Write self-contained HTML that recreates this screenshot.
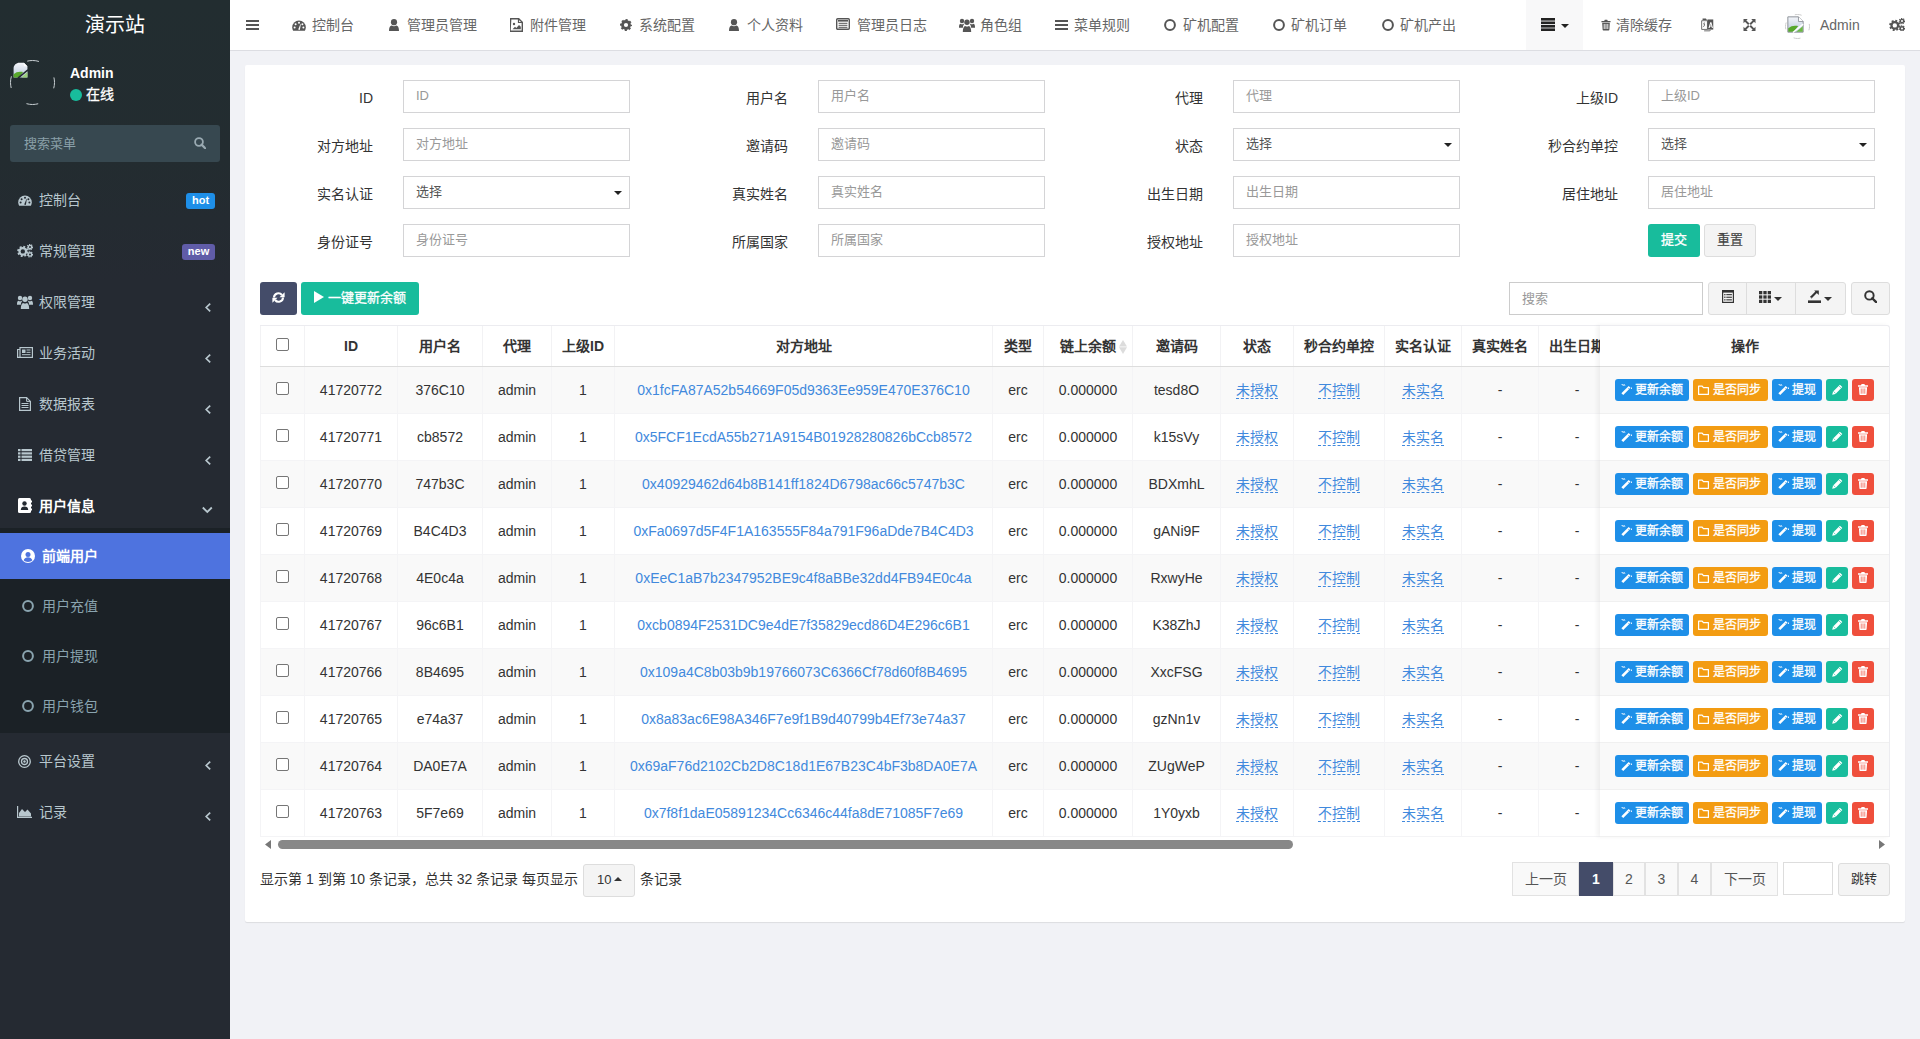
<!DOCTYPE html><html lang="zh-CN"><head><meta charset="utf-8"><title>前端用户</title><style>
*{box-sizing:border-box}
html,body{margin:0;padding:0;width:1920px;height:1039px;overflow:hidden;background:#f1f2f6;font-family:"Liberation Sans",sans-serif;font-size:14px;color:#333}
.ab{position:absolute}
.ab svg{display:block}
.t{position:absolute;white-space:nowrap;line-height:1}
#sb{position:absolute;left:0;top:0;width:230px;height:1039px;background:linear-gradient(#222d30 0,#232c30 160px,#252a32 280px,#252a32 100%)}
#hd{position:absolute;left:230px;top:0;width:1690px;height:51px;background:#fff;border-bottom:1px solid #dcdde2}
.nv{color:#666;font-size:14px}
.nvi{color:#555}
#pn{position:absolute;left:245px;top:65px;width:1660px;height:857px;background:#fff;border-radius:2px;box-shadow:0 1px 1px rgba(0,0,0,.09)}
.lbl{position:absolute;font-size:14px;color:#333;text-align:right;width:120px;line-height:20px}
.inp{position:absolute;height:33px;width:227px;border:1px solid #d4d4d6;background:#fff;font-size:13px;color:#999;line-height:29px;padding-left:12px}
.sel{color:#555}
.btn{position:absolute;border-radius:3px;color:#fff;text-align:center}
table.dt{border-collapse:collapse;table-layout:fixed;position:absolute;left:0;top:0}
table.dt th{height:40px;line-height:20px;font-weight:bold;border-left:1px solid #f2f2f4;border-bottom:1px solid #ddd;text-align:center;font-size:14px;color:#333;padding:0;white-space:nowrap;overflow:hidden}
table.dt td{height:47px;line-height:20px;border-left:1px solid #f4f4f6;border-bottom:1px solid #f4f4f6;padding-bottom:2px;text-align:center;font-size:14px;color:#333;padding:0;white-space:nowrap;overflow:hidden}
table.dt tr.s td{background:#f9f9f9}
table.dt td .cb{top:-2px}
.cb{display:inline-block;width:13px;height:13px;border:1px solid #767676;border-radius:2px;background:#fff;vertical-align:middle;position:relative;top:-3px;left:0}
.lk{color:#4189dd}
.dl{color:#4189dd;border-bottom:1px dashed #4189dd}
.rbt{position:absolute;top:0;line-height:22px;-webkit-text-stroke:0.3px #fff}
.rb{position:absolute;height:22px;top:12px;color:#fff;border-radius:3px;color:#fff;font-size:12px;line-height:22px}
.pg{position:absolute;top:862px;height:34px;border:1px solid #e2e2e2;background:#f9f9f9;color:#555;text-align:center;line-height:32px;font-size:14px}
</style></head><body>
<div id="sb">
<div class="t" style="left:0;width:230px;top:14px;text-align:center;color:#fff;font-size:20px;line-height:22px">演示站</div>
<div class="ab" style="left:10px;top:60px;width:45px;height:45px"><svg width="45" height="45" viewBox="0 0 45 45" style=""><circle cx="22.5" cy="22.5" r="22" fill="none" stroke="#c8cfd2" stroke-width="1" stroke-dasharray="12 22.55" stroke-dashoffset="40.6"/></svg></div>
<div class="ab" style="left:12px;top:62px;width:17px;height:17px"><svg width="17" height="17" viewBox="0 0 16 16" style=""><defs><linearGradient id="bgA" x1="0" y1="0" x2="0" y2="1"><stop offset="0" stop-color="#f4f6fa"/><stop offset="1" stop-color="#b9c8dc"/></linearGradient></defs><path d="M1.5 14.5V6C1.5 3 4 0.8 7 0.8h4.2l3.3 3.3v10.4z" fill="url(#bgA)"/><path d="M11.2 0.8v3.3h3.3" fill="#fff"/><path d="M1.5 14.5V11.5C4 9 7.5 8.6 10.5 9.5L6.5 14.5z" fill="#58a82c"/><path d="M8.8 14.5l5.7-5v5z" fill="#9bcf7a"/><path d="M5.6 15.2L15 7.4" stroke="#242a31" stroke-width="1.4"/></svg></div>
<div class="t" style="left:70px;top:66px;color:#fff;font-weight:bold;font-size:14px;line-height:14px">Admin</div>
<div class="ab" style="left:70px;top:89px;width:12px;height:12px;border-radius:50%;background:#18bc9c"></div>
<div class="t" style="left:86px;top:87px;color:#fff;font-size:14px;line-height:14px;-webkit-text-stroke:.3px #fff">在线</div>
<div class="ab" style="left:10px;top:125px;width:210px;height:37px;background:#374850;border-radius:3px"></div>
<div class="t" style="left:24px;top:137px;color:#8aa0a9;font-size:13px;line-height:14px">搜索菜单</div>
<div class="ab" style="left:194px;top:137px;width:12px;height:12px;color:#9aaab2"><svg width="12" height="12" viewBox="0 0 12 12" style=""><circle cx="5" cy="5" r="3.9" fill="none" stroke="currentColor" stroke-width="1.8"/><path d="M7.6 7.6l3.8 3.8" stroke="currentColor" stroke-width="2.2" stroke-linecap="round"/></svg></div>
<div class="t" style="left:39px;top:192px;color:#b8c7ce;font-size:14px;line-height:16px;font-weight:normal">控制台</div>
<div class="ab" style="left:18px;top:195px;width:14px;height:11px;color:#b8c7ce"><svg width="14" height="11" viewBox="0 0 14 11" style=""><path d="M7 0.5A6.8 6.8 0 0 0 0.2 7.3c0 1.3 .3 2.5 .9 3.5h11.8c.6-1 .9-2.2 .9-3.5A6.8 6.8 0 0 0 7 0.5z" fill="currentColor"/><g fill="#242a31"><circle cx="2.6" cy="7.4" r="1"/><circle cx="3.6" cy="4.2" r="1"/><circle cx="7" cy="2.8" r="1"/><circle cx="11.4" cy="7.4" r="1"/><circle cx="10.4" cy="4.2" r="1"/><path d="M6.2 9.6 L8.6 3.8 L8.9 3.9 L7.8 10 Z"/></g></svg></div>
<div class="t" style="left:39px;top:243px;color:#b8c7ce;font-size:14px;line-height:16px;font-weight:normal">常规管理</div>
<div class="ab" style="left:17px;top:244px;width:16px;height:14px;color:#b8c7ce"><svg width="16" height="14" viewBox="0 0 16 14" style=""><circle cx="5.8" cy="7.4" r="3.3" fill="none" stroke="currentColor" stroke-width="2.2"/><circle cx="5.8" cy="7.4" r="4.6" fill="none" stroke="currentColor" stroke-width="2" stroke-dasharray="1.9 1.7"/><circle cx="13" cy="3.1" r="1.7" fill="none" stroke="currentColor" stroke-width="1.4"/><circle cx="13" cy="3.1" r="2.6" fill="none" stroke="currentColor" stroke-width="1.2" stroke-dasharray="1.2 1"/><circle cx="13" cy="10.4" r="1.7" fill="none" stroke="currentColor" stroke-width="1.4"/><circle cx="13" cy="10.4" r="2.6" fill="none" stroke="currentColor" stroke-width="1.2" stroke-dasharray="1.2 1"/></svg></div>
<div class="t" style="left:39px;top:294px;color:#b8c7ce;font-size:14px;line-height:16px;font-weight:normal">权限管理</div>
<div class="ab" style="left:17px;top:295px;width:16px;height:14px;color:#b8c7ce"><svg width="16" height="14" viewBox="0 0 16 14" style=""><circle cx="3" cy="3" r="2.2" fill="currentColor"/><circle cx="13" cy="3" r="2.2" fill="currentColor"/><circle cx="8" cy="4.2" r="2.7" fill="currentColor"/><path d="M0 9c0-2 .6-3 1.5-3.3.5 .4 1 .6 1.5 .6s1.2-.2 1.6-.6l.6 .2c-.8 .9-1.3 2.2-1.3 3.8H0z" fill="currentColor"/><path d="M16 9c0-2-.6-3-1.5-3.3-.5 .4-1 .6-1.5 .6s-1.2-.2-1.6-.6l-.6 .2c.8 .9 1.3 2.2 1.3 3.8H16z" fill="currentColor"/><path d="M3.8 14c0-3.7 1-5.6 2.4-6 .5 .4 1.1 .6 1.8 .6s1.3-.2 1.8-.6c1.4 .4 2.4 2.3 2.4 6z" fill="currentColor"/></svg></div>
<div class="ab" style="left:205px;top:303px;width:7px;height:9px;color:#b8c7ce"><svg width="7" height="9" viewBox="0 0 7 9" style=""><path d="M5.2 0.6 L1.2 4.5 L5.2 8.4" fill="none" stroke="currentColor" stroke-width="1.7"/></svg></div>
<div class="t" style="left:39px;top:345px;color:#b8c7ce;font-size:14px;line-height:16px;font-weight:normal">业务活动</div>
<div class="ab" style="left:17px;top:347px;width:16px;height:11px;color:#b8c7ce"><svg width="16" height="11" viewBox="0 0 16 11" style=""><rect x="3" y="0.6" width="12.4" height="9.8" fill="none" stroke="currentColor" stroke-width="1.2"/><path d="M3 2.5H0.6v7.9h2.4" fill="none" stroke="currentColor" stroke-width="1.2"/><rect x="5" y="2.5" width="3.5" height="3.5" fill="currentColor"/><rect x="9.5" y="2.5" width="4" height="1" fill="currentColor"/><rect x="9.5" y="4.8" width="4" height="1" fill="currentColor"/><rect x="5" y="7.2" width="8.5" height="1" fill="currentColor"/></svg></div>
<div class="ab" style="left:205px;top:354px;width:7px;height:9px;color:#b8c7ce"><svg width="7" height="9" viewBox="0 0 7 9" style=""><path d="M5.2 0.6 L1.2 4.5 L5.2 8.4" fill="none" stroke="currentColor" stroke-width="1.7"/></svg></div>
<div class="t" style="left:39px;top:396px;color:#b8c7ce;font-size:14px;line-height:16px;font-weight:normal">数据报表</div>
<div class="ab" style="left:19px;top:397px;width:12px;height:14px;color:#b8c7ce"><svg width="12" height="14" viewBox="0 0 12 14" style=""><path d="M0.6 0.6h7l3.8 3.8v9h-10.8z" fill="none" stroke="currentColor" stroke-width="1.2"/><path d="M7.6 0.6v3.8h3.8" fill="none" stroke="currentColor" stroke-width="1"/><rect x="2.5" y="6" width="7" height="1" fill="currentColor"/><rect x="2.5" y="8" width="7" height="1" fill="currentColor"/><rect x="2.5" y="10" width="7" height="1" fill="currentColor"/></svg></div>
<div class="ab" style="left:205px;top:405px;width:7px;height:9px;color:#b8c7ce"><svg width="7" height="9" viewBox="0 0 7 9" style=""><path d="M5.2 0.6 L1.2 4.5 L5.2 8.4" fill="none" stroke="currentColor" stroke-width="1.7"/></svg></div>
<div class="t" style="left:39px;top:447px;color:#b8c7ce;font-size:14px;line-height:16px;font-weight:normal">借贷管理</div>
<div class="ab" style="left:18px;top:449px;width:14px;height:12px;color:#b8c7ce"><svg width="14" height="12" viewBox="0 0 14 12" style=""><g fill="currentColor"><rect x="0" y="0" width="2.5" height="2.2"/><rect x="3.5" y="0" width="10.5" height="2.2"/><rect x="0" y="3.3" width="2.5" height="2.2"/><rect x="3.5" y="3.3" width="10.5" height="2.2"/><rect x="0" y="6.6" width="2.5" height="2.2"/><rect x="3.5" y="6.6" width="10.5" height="2.2"/><rect x="0" y="9.8" width="2.5" height="2.2"/><rect x="3.5" y="9.8" width="10.5" height="2.2"/></g></svg></div>
<div class="ab" style="left:205px;top:456px;width:7px;height:9px;color:#b8c7ce"><svg width="7" height="9" viewBox="0 0 7 9" style=""><path d="M5.2 0.6 L1.2 4.5 L5.2 8.4" fill="none" stroke="currentColor" stroke-width="1.7"/></svg></div>
<div class="t" style="left:39px;top:498px;color:#fff;font-size:14px;line-height:16px;font-weight:bold">用户信息</div>
<div class="ab" style="left:18px;top:498px;width:14px;height:15px"><svg width="14" height="15" viewBox="0 0 14 15" style=""><rect x="0" y="0" width="13" height="15" rx="1.5" fill="#fff"/><circle cx="6.5" cy="5.5" r="2.2" fill="#242a31"/><path d="M2.8 12c0-2.5 1.5-3.6 3.7-3.6s3.7 1.1 3.7 3.6z" fill="#242a31"/><rect x="12.3" y="2.5" width="1.7" height="2" fill="#fff"/><rect x="12.3" y="6.5" width="1.7" height="2" fill="#fff"/><rect x="12.3" y="10.5" width="1.7" height="2" fill="#fff"/></svg></div>
<div class="ab" style="left:202px;top:506px;width:11px;height:8px;color:#b8c7ce"><svg width="11" height="8" viewBox="0 0 11 8" style=""><path d="M0.8 1.5 L5.3 6 L9.8 1.5" fill="none" stroke="currentColor" stroke-width="1.8"/></svg></div>
<div class="ab" style="left:186px;top:193px;width:29px;height:16px;border-radius:3px;background:#1e8fe8;color:#fff;font-size:11px;font-weight:bold;text-align:center;line-height:15px">hot</div>
<div class="ab" style="left:182px;top:244px;width:33px;height:16px;border-radius:3px;background:#605ca8;color:#fff;font-size:11px;font-weight:bold;text-align:center;line-height:15px">new</div>
<div class="ab" style="left:0;top:528px;width:230px;height:205px;background:#1b2126"></div>
<div class="ab" style="left:0;top:533px;width:230px;height:46px;background:#4e73df"></div>
<div class="ab" style="left:21px;top:549px;width:14px;height:14px"><svg width="14" height="14" viewBox="0 0 14 14" style=""><circle cx="7" cy="7" r="7" fill="#fff"/><circle cx="7" cy="5.4" r="2.5" fill="#4e73df"/><path d="M2.6 11.3c.8-2 2.4-3 4.4-3s3.6 1 4.4 3C10.3 12.4 8.8 13 7 13s-3.3-.6-4.4-1.7z" fill="#4e73df"/></svg></div>
<div class="t" style="left:42px;top:548px;color:#fff;font-size:14px;line-height:16px;font-weight:bold">前端用户</div>
<div class="ab" style="left:22px;top:600px;width:12px;height:12px;color:#8aa4af"><svg width="12" height="12" viewBox="0 0 12 12" style=""><circle cx="6" cy="6" r="4.9" fill="none" stroke="currentColor" stroke-width="2"/></svg></div>
<div class="t" style="left:42px;top:598px;color:#8aa4af;font-size:14px;line-height:16px">用户充值</div>
<div class="ab" style="left:22px;top:650px;width:12px;height:12px;color:#8aa4af"><svg width="12" height="12" viewBox="0 0 12 12" style=""><circle cx="6" cy="6" r="4.9" fill="none" stroke="currentColor" stroke-width="2"/></svg></div>
<div class="t" style="left:42px;top:648px;color:#8aa4af;font-size:14px;line-height:16px">用户提现</div>
<div class="ab" style="left:22px;top:700px;width:12px;height:12px;color:#8aa4af"><svg width="12" height="12" viewBox="0 0 12 12" style=""><circle cx="6" cy="6" r="4.9" fill="none" stroke="currentColor" stroke-width="2"/></svg></div>
<div class="t" style="left:42px;top:698px;color:#8aa4af;font-size:14px;line-height:16px">用户钱包</div>
<div class="ab" style="left:18px;top:755px;width:13px;height:13px;color:#b8c7ce"><svg width="13" height="13" viewBox="0 0 13 13" style=""><circle cx="6.5" cy="6.5" r="5.8" fill="none" stroke="currentColor" stroke-width="1.3"/><circle cx="6.5" cy="6.5" r="3" fill="none" stroke="currentColor" stroke-width="1.3"/><circle cx="6.5" cy="6.5" r="1.2" fill="currentColor"/></svg></div>
<div class="t" style="left:39px;top:753px;color:#b8c7ce;font-size:14px;line-height:16px">平台设置</div>
<div class="ab" style="left:205px;top:761px;width:7px;height:9px;color:#b8c7ce"><svg width="7" height="9" viewBox="0 0 7 9" style=""><path d="M5.2 0.6 L1.2 4.5 L5.2 8.4" fill="none" stroke="currentColor" stroke-width="1.7"/></svg></div>
<div class="ab" style="left:17px;top:806px;width:15px;height:12px;color:#b8c7ce"><svg width="15" height="12" viewBox="0 0 15 12" style=""><path d="M0.6 0v11.4H15" fill="none" stroke="currentColor" stroke-width="1.2"/><path d="M2 10.5V7l3-4 3 3 2.5-2.5 3.5 4v3z" fill="currentColor"/></svg></div>
<div class="t" style="left:39px;top:804px;color:#b8c7ce;font-size:14px;line-height:16px">记录</div>
<div class="ab" style="left:205px;top:812px;width:7px;height:9px;color:#b8c7ce"><svg width="7" height="9" viewBox="0 0 7 9" style=""><path d="M5.2 0.6 L1.2 4.5 L5.2 8.4" fill="none" stroke="currentColor" stroke-width="1.7"/></svg></div>
</div>
<div id="hd"></div>
<div class="ab" style="left:246px;top:20px;width:13px;height:10px;color:#555"><svg width="13" height="10" viewBox="0 0 13 10" style=""><rect x="0" y="0" width="13" height="2" fill="currentColor"/><rect x="0" y="4" width="13" height="2" fill="currentColor"/><rect x="0" y="8" width="13" height="2" fill="currentColor"/></svg></div>
<div class="ab" style="left:292px;top:20px;width:14px;height:11px;color:#555"><svg width="14" height="11" viewBox="0 0 14 11" style=""><path d="M7 0.5A6.8 6.8 0 0 0 0.2 7.3c0 1.3 .3 2.5 .9 3.5h11.8c.6-1 .9-2.2 .9-3.5A6.8 6.8 0 0 0 7 0.5z" fill="currentColor"/><g fill="#fff"><circle cx="2.6" cy="7.4" r="1"/><circle cx="3.6" cy="4.2" r="1"/><circle cx="7" cy="2.8" r="1"/><circle cx="11.4" cy="7.4" r="1"/><circle cx="10.4" cy="4.2" r="1"/><path d="M6.2 9.6 L8.6 3.8 L8.9 3.9 L7.8 10 Z"/></g></svg></div>
<div class="t nv" style="left:312px;top:17px;line-height:16px">控制台</div>
<div class="ab" style="left:389px;top:19px;width:10px;height:12px;color:#555"><svg width="10" height="12" viewBox="0 0 10 12" style=""><circle cx="5" cy="3.2" r="3.1" fill="currentColor"/><path d="M0 12c0-3.5 1-5.3 2.6-5.6 .7 .5 1.5 .8 2.4 .8s1.7-.3 2.4-.8C9 6.7 10 8.5 10 12z" fill="currentColor"/></svg></div>
<div class="t nv" style="left:407px;top:17px;line-height:16px">管理员管理</div>
<div class="ab" style="left:510px;top:18px;width:13px;height:14px;color:#555"><svg width="13" height="14" viewBox="0 0 13 14" style=""><path d="M0.7 0.7h8l3.6 3.6v9h-12.3z" fill="none" stroke="currentColor" stroke-width="1.4"/><path d="M8.5 0.7v3.8h3.8" fill="none" stroke="currentColor" stroke-width="1.2"/><circle cx="4" cy="6" r="1.2" fill="currentColor"/><path d="M2.5 11.3l2.5-2.6 1.3 1.3 2.7-3 1.8 1.8v2.5z" fill="currentColor"/></svg></div>
<div class="t nv" style="left:530px;top:17px;line-height:16px">附件管理</div>
<div class="ab" style="left:620px;top:19px;width:12px;height:12px;color:#555"><svg width="12" height="12" viewBox="0 0 12 12" style=""><circle cx="6" cy="6" r="3.5" fill="none" stroke="currentColor" stroke-width="2.8"/><circle cx="6" cy="6" r="5.1" fill="none" stroke="currentColor" stroke-width="1.8" stroke-dasharray="2.1 1.9" stroke-dashoffset="1.05"/></svg></div>
<div class="t nv" style="left:639px;top:17px;line-height:16px">系统配置</div>
<div class="ab" style="left:729px;top:19px;width:10px;height:12px;color:#555"><svg width="10" height="12" viewBox="0 0 10 12" style=""><circle cx="5" cy="3.2" r="3.1" fill="currentColor"/><path d="M0 12c0-3.5 1-5.3 2.6-5.6 .7 .5 1.5 .8 2.4 .8s1.7-.3 2.4-.8C9 6.7 10 8.5 10 12z" fill="currentColor"/></svg></div>
<div class="t nv" style="left:747px;top:17px;line-height:16px">个人资料</div>
<div class="ab" style="left:836px;top:18px;width:14px;height:12px;color:#555"><svg width="14" height="12" viewBox="0 0 14 12" style=""><rect x="0.7" y="0.7" width="12.6" height="10.6" rx="1" fill="none" stroke="currentColor" stroke-width="1.4"/><rect x="2" y="2" width="10" height="1.6" fill="currentColor"/><rect x="2.6" y="4.8" width="8.8" height="1" fill="currentColor"/><rect x="2.6" y="6.8" width="8.8" height="1" fill="currentColor"/><rect x="2.6" y="8.8" width="8.8" height="1" fill="currentColor"/></svg></div>
<div class="t nv" style="left:857px;top:17px;line-height:16px">管理员日志</div>
<div class="ab" style="left:959px;top:18px;width:16px;height:14px;color:#555"><svg width="16" height="14" viewBox="0 0 16 14" style=""><circle cx="3" cy="3" r="2.2" fill="currentColor"/><circle cx="13" cy="3" r="2.2" fill="currentColor"/><circle cx="8" cy="4.2" r="2.7" fill="currentColor"/><path d="M0 9c0-2 .6-3 1.5-3.3.5 .4 1 .6 1.5 .6s1.2-.2 1.6-.6l.6 .2c-.8 .9-1.3 2.2-1.3 3.8H0z" fill="currentColor"/><path d="M16 9c0-2-.6-3-1.5-3.3-.5 .4-1 .6-1.5 .6s-1.2-.2-1.6-.6l-.6 .2c.8 .9 1.3 2.2 1.3 3.8H16z" fill="currentColor"/><path d="M3.8 14c0-3.7 1-5.6 2.4-6 .5 .4 1.1 .6 1.8 .6s1.3-.2 1.8-.6c1.4 .4 2.4 2.3 2.4 6z" fill="currentColor"/></svg></div>
<div class="t nv" style="left:980px;top:17px;line-height:16px">角色组</div>
<div class="ab" style="left:1055px;top:20px;width:13px;height:10px;color:#555"><svg width="13" height="10" viewBox="0 0 13 10" style=""><rect x="0" y="0" width="13" height="2" fill="currentColor"/><rect x="0" y="4" width="13" height="2" fill="currentColor"/><rect x="0" y="8" width="13" height="2" fill="currentColor"/></svg></div>
<div class="t nv" style="left:1074px;top:17px;line-height:16px">菜单规则</div>
<div class="ab" style="left:1164px;top:19px;width:12px;height:12px;color:#555"><svg width="12" height="12" viewBox="0 0 12 12" style=""><circle cx="6" cy="6" r="4.9" fill="none" stroke="currentColor" stroke-width="2"/></svg></div>
<div class="t nv" style="left:1183px;top:17px;line-height:16px">矿机配置</div>
<div class="ab" style="left:1273px;top:19px;width:12px;height:12px;color:#555"><svg width="12" height="12" viewBox="0 0 12 12" style=""><circle cx="6" cy="6" r="4.9" fill="none" stroke="currentColor" stroke-width="2"/></svg></div>
<div class="t nv" style="left:1291px;top:17px;line-height:16px">矿机订单</div>
<div class="ab" style="left:1382px;top:19px;width:12px;height:12px;color:#555"><svg width="12" height="12" viewBox="0 0 12 12" style=""><circle cx="6" cy="6" r="4.9" fill="none" stroke="currentColor" stroke-width="2"/></svg></div>
<div class="t nv" style="left:1400px;top:17px;line-height:16px">矿机产出</div>
<div class="ab" style="left:1526px;top:0;width:57px;height:50px;background:#f8f8f9"></div>
<div class="ab" style="left:1541px;top:18px;width:14px;height:13px;color:#222"><svg width="14" height="13" viewBox="0 0 14 13" style=""><rect x="0" y="0" width="14" height="2.6" fill="currentColor"/><rect x="0" y="3.5" width="14" height="2.6" fill="currentColor"/><rect x="0" y="7" width="14" height="2.6" fill="currentColor"/><rect x="0" y="10.4" width="14" height="2.6" fill="currentColor"/></svg></div>
<div class="ab" style="left:1561px;top:24px;width:8px;height:4px;color:#222"><svg width="8" height="4" viewBox="0 0 8 4" style=""><path d="M0 0h8L4 4z" fill="currentColor"/></svg></div>
<div class="ab" style="left:1601px;top:19px;width:10px;height:12px;color:#555"><svg width="10" height="12" viewBox="0 0 11 12" style=""><path d="M3.5 1.5 L4.2 0.2 h2.6 L7.5 1.5 H10.5 v1.4 H0.5 V1.5z" fill="currentColor"/><path d="M1.3 3.5h8.4l-.5 7.6c0 .5-.4 .9-.9 .9H2.7c-.5 0-.9-.4-.9-.9z" fill="currentColor"/><g fill="#fff"><rect x="3" y="4.8" width="1" height="5.6"/><rect x="5" y="4.8" width="1" height="5.6"/><rect x="7" y="4.8" width="1" height="5.6"/></g></svg></div>
<div class="t nv" style="left:1616px;top:17px;line-height:16px">清除缓存</div>
<div class="ab" style="left:1701px;top:18px;width:13px;height:14px;color:#555"><svg width="13" height="14" viewBox="0 0 12.5 13.5" style=""><path d="M0.6 2.6h5.6v8.4H0.6z" fill="#fff" stroke="currentColor" stroke-width=".8"/><path d="M1.5 0.6h3.2l1 1.4H1.5z" fill="currentColor"/><path d="M2 5.2l1.8 1.4M3.2 4.2v3.6M1.8 8.6l1.6-1.2" stroke="currentColor" stroke-width=".6" fill="none"/><path d="M6.2 1.4h5.6v9.8H6.2z" fill="currentColor"/><path d="M7.2 9.6l1.7-5.6h1.1l1.5 5.6h-1l-.4-1.3H8.7l-.4 1.3zm1.8-2.2h1l-.5-1.8z" fill="#fff"/><path d="M3 12.4h5.5l.8-1" stroke="currentColor" stroke-width=".8" fill="none"/></svg></div>
<div class="ab" style="left:1743px;top:19px;width:13px;height:12px;color:#555"><svg width="13" height="12" viewBox="0 0 13 13" style=""><path d="M0 0h4.6L3.1 1.6 6.5 5 5 6.5 1.6 3.1 0 4.6zM13 0v4.6l-1.6-1.5L8 6.5 6.5 5l3.4-3.4L8.4 0zM0 13V8.4l1.6 1.5L5 6.5 6.5 8l-3.4 3.4 1.5 1.6zM13 13H8.4l1.5-1.6L6.5 8 8 6.5l3.4 3.4 1.6-1.5z" fill="currentColor"/></svg></div>
<div class="ab" style="left:1785px;top:14px;width:25px;height:25px"><svg width="25" height="25" viewBox="0 0 25 25" style=""><circle cx="12.5" cy="12.5" r="12" fill="none" stroke="#ccc" stroke-width="1" stroke-dasharray="7 11.85" stroke-dashoffset="22"/></svg></div>
<div class="ab" style="left:1787px;top:16px;width:17px;height:17px"><svg width="17" height="17" viewBox="0 0 16 16" style=""><defs><linearGradient id="bgB" x1="0" y1="0" x2="0" y2="1"><stop offset="0" stop-color="#f4f6fa"/><stop offset="1" stop-color="#b9c8dc"/></linearGradient></defs><path d="M0.8 15.2V0.8h10l4.4 4.4v10z" fill="url(#bgB)" stroke="#8a8f96" stroke-width=".9"/><path d="M10.8 0.8v4.4h4.4" fill="#fff" stroke="#8a8f96" stroke-width=".8"/><path d="M1.2 14.8V11.5C4 9 7.5 8.6 10.5 9.5L6.5 14.8z" fill="#58a82c"/><path d="M8.8 14.8l6-5.2v5.2z" fill="#6cb843"/><path d="M5.6 15.5L15.2 7.6" stroke="#fff" stroke-width="1.4"/></svg></div>
<div class="t nv" style="left:1820px;top:17px;line-height:16px;font-size:14px">Admin</div>
<div class="ab" style="left:1889px;top:18px;width:16px;height:13px;color:#555"><svg width="16" height="13" viewBox="0 0 16 13" style=""><circle cx="5.8" cy="7.4" r="3.3" fill="none" stroke="currentColor" stroke-width="2.2"/><circle cx="5.8" cy="7.4" r="4.6" fill="none" stroke="currentColor" stroke-width="2" stroke-dasharray="1.9 1.7"/><circle cx="13" cy="3.1" r="1.7" fill="none" stroke="currentColor" stroke-width="1.4"/><circle cx="13" cy="3.1" r="2.6" fill="none" stroke="currentColor" stroke-width="1.2" stroke-dasharray="1.2 1"/><circle cx="13" cy="10.4" r="1.7" fill="none" stroke="currentColor" stroke-width="1.4"/><circle cx="13" cy="10.4" r="2.6" fill="none" stroke="currentColor" stroke-width="1.2" stroke-dasharray="1.2 1"/></svg></div>
<div id="pn"></div>
<div class="lbl" style="left:253px;top:88px">ID</div>
<div class="inp" style="left:403px;top:80px">ID</div>
<div class="lbl" style="left:668px;top:88px">用户名</div>
<div class="inp" style="left:818px;top:80px">用户名</div>
<div class="lbl" style="left:1083px;top:88px">代理</div>
<div class="inp" style="left:1233px;top:80px">代理</div>
<div class="lbl" style="left:1498px;top:88px">上级ID</div>
<div class="inp" style="left:1648px;top:80px">上级ID</div>
<div class="lbl" style="left:253px;top:136px">对方地址</div>
<div class="inp" style="left:403px;top:128px">对方地址</div>
<div class="lbl" style="left:668px;top:136px">邀请码</div>
<div class="inp" style="left:818px;top:128px">邀请码</div>
<div class="lbl" style="left:1083px;top:136px">状态</div>
<div class="inp sel" style="left:1233px;top:128px">选择</div>
<div class="ab" style="left:1444px;top:143px;width:8px;height:4px;color:#222"><svg width="8" height="4" viewBox="0 0 8 4" style=""><path d="M0 0h8L4 4z" fill="currentColor"/></svg></div>
<div class="lbl" style="left:1498px;top:136px">秒合约单控</div>
<div class="inp sel" style="left:1648px;top:128px">选择</div>
<div class="ab" style="left:1859px;top:143px;width:8px;height:4px;color:#222"><svg width="8" height="4" viewBox="0 0 8 4" style=""><path d="M0 0h8L4 4z" fill="currentColor"/></svg></div>
<div class="lbl" style="left:253px;top:184px">实名认证</div>
<div class="inp sel" style="left:403px;top:176px">选择</div>
<div class="ab" style="left:614px;top:191px;width:8px;height:4px;color:#222"><svg width="8" height="4" viewBox="0 0 8 4" style=""><path d="M0 0h8L4 4z" fill="currentColor"/></svg></div>
<div class="lbl" style="left:668px;top:184px">真实姓名</div>
<div class="inp" style="left:818px;top:176px">真实姓名</div>
<div class="lbl" style="left:1083px;top:184px">出生日期</div>
<div class="inp" style="left:1233px;top:176px">出生日期</div>
<div class="lbl" style="left:1498px;top:184px">居住地址</div>
<div class="inp" style="left:1648px;top:176px">居住地址</div>
<div class="lbl" style="left:253px;top:232px">身份证号</div>
<div class="inp" style="left:403px;top:224px">身份证号</div>
<div class="lbl" style="left:668px;top:232px">所属国家</div>
<div class="inp" style="left:818px;top:224px">所属国家</div>
<div class="lbl" style="left:1083px;top:232px">授权地址</div>
<div class="inp" style="left:1233px;top:224px">授权地址</div>
<div class="btn" style="left:1648px;top:224px;width:52px;height:33px;background:#18bc9c;font-size:13px;line-height:32px;-webkit-text-stroke:.3px #fff">提交</div>
<div class="btn" style="left:1704px;top:224px;width:52px;height:33px;background:#f4f4f4;border:1px solid #ddd;color:#444;font-size:13px;line-height:30px;-webkit-text-stroke:.2px #444">重置</div>
<div class="btn" style="left:260px;top:282px;width:37px;height:33px;background:#444c69"></div>
<div class="ab" style="left:272px;top:292px;width:13px;height:11px;color:#fff"><svg width="13" height="11" viewBox="0 0 13 11" style=""><path d="M2 5.6A4.4 4.4 0 0 1 9.9 3" fill="none" stroke="currentColor" stroke-width="2.1"/><path d="M12.6 0.2V5.3H7.5z" fill="currentColor"/><path d="M11 5.4A4.4 4.4 0 0 1 3.1 8" fill="none" stroke="currentColor" stroke-width="2.1"/><path d="M0.4 10.8V5.7H5.5z" fill="currentColor"/></svg></div>
<div class="btn" style="left:301px;top:282px;width:118px;height:33px;background:#18bc9c"></div>
<div class="ab" style="left:314px;top:291px;width:10px;height:12px"><svg width="10" height="12" viewBox="0 0 10 12" style=""><path d="M0 0L10 6 0 12z" fill="#fff"/></svg></div>
<div class="t" style="left:328px;top:290px;color:#fff;font-size:13px;line-height:16px;-webkit-text-stroke:.3px #fff">一键更新余额</div>
<div class="inp" style="left:1509px;top:282px;width:194px;height:33px;padding-left:12px;line-height:31px;color:#999;border-color:#ccc">搜索</div>
<div class="ab" style="left:1708px;top:282px;width:138px;height:33px;background:#f4f4f4;border:1px solid #ddd;border-radius:3px"></div>
<div class="ab" style="left:1746px;top:282px;width:1px;height:33px;background:#ddd"></div>
<div class="ab" style="left:1795px;top:282px;width:1px;height:33px;background:#ddd"></div>
<div class="ab" style="left:1722px;top:290px;width:12px;height:13px;color:#333"><svg width="12" height="13" viewBox="0 0 12 13" style=""><rect x="0.6" y="0.6" width="10.8" height="11.8" fill="none" stroke="currentColor" stroke-width="1.2"/><rect x="0.6" y="0.6" width="10.8" height="2" fill="currentColor"/><g fill="currentColor"><rect x="2.2" y="4" width="1.3" height="1.3"/><rect x="2.2" y="6.6" width="1.3" height="1.3"/><rect x="2.2" y="9.2" width="1.3" height="1.3"/><rect x="4.3" y="4.1" width="5.6" height="1.1"/><rect x="4.3" y="6.7" width="5.6" height="1.1"/><rect x="4.3" y="9.3" width="5.6" height="1.1"/></g></svg></div>
<div class="ab" style="left:1759px;top:291px;width:12px;height:12px;color:#333"><svg width="12" height="12" viewBox="0 0 12 12" style=""><g fill="currentColor"><rect x="0" y="0" width="3.3" height="3.3"/><rect x="4.35" y="0" width="3.3" height="3.3"/><rect x="8.7" y="0" width="3.3" height="3.3"/><rect x="0" y="4.35" width="3.3" height="3.3"/><rect x="4.35" y="4.35" width="3.3" height="3.3"/><rect x="8.7" y="4.35" width="3.3" height="3.3"/><rect x="0" y="8.7" width="3.3" height="3.3"/><rect x="4.35" y="8.7" width="3.3" height="3.3"/><rect x="8.7" y="8.7" width="3.3" height="3.3"/></g></svg></div>
<div class="ab" style="left:1774px;top:297px;width:8px;height:4px;color:#333"><svg width="8" height="4" viewBox="0 0 8 4" style=""><path d="M0 0h8L4 4z" fill="currentColor"/></svg></div>
<div class="ab" style="left:1808px;top:290px;width:13px;height:13px;color:#333"><svg width="13" height="13" viewBox="0 0 13 13" style=""><path d="M3.2 7.2L8.6 1.8" stroke="currentColor" stroke-width="2.2"/><path d="M6.2 0.4h4.6v4.6z" fill="currentColor"/><rect x="0" y="10.4" width="13" height="2.6" fill="currentColor"/><path d="M2.2 6.6l1.6 1.6" stroke="currentColor" stroke-width="1"/></svg></div>
<div class="ab" style="left:1824px;top:297px;width:8px;height:4px;color:#333"><svg width="8" height="4" viewBox="0 0 8 4" style=""><path d="M0 0h8L4 4z" fill="currentColor"/></svg></div>
<div class="ab" style="left:1851px;top:282px;width:39px;height:33px;background:#f4f4f4;border:1px solid #ddd;border-radius:3px"></div>
<div class="ab" style="left:1864px;top:290px;width:13px;height:13px;color:#333"><svg width="13" height="13" viewBox="0 0 12 12" style=""><circle cx="5" cy="5" r="3.9" fill="none" stroke="currentColor" stroke-width="1.8"/><path d="M7.6 7.6l3.8 3.8" stroke="currentColor" stroke-width="2.2" stroke-linecap="round"/></svg></div>
<div class="ab" style="left:260px;top:325px;width:1340px;height:512px;overflow:hidden;border-top:1px solid #ececf0">
<table class="dt" style="width:1455px"><colgroup><col style="width:44px"><col style="width:93px"><col style="width:85px"><col style="width:69px"><col style="width:63px"><col style="width:378px"><col style="width:51px"><col style="width:89px"><col style="width:88px"><col style="width:73px"><col style="width:91px"><col style="width:77px"><col style="width:77px"><col style="width:77px"><col style="width:100px"></colgroup>
<tr><th><span class="cb"></span></th><th>ID</th><th>用户名</th><th>代理</th><th>上级ID</th><th>对方地址</th><th>类型</th><th>链上余额</th><th>邀请码</th><th>状态</th><th>秒合约单控</th><th>实名认证</th><th>真实姓名</th><th>出生日期</th><th>居住地址</th></tr>
<tr class="s"><td><span class="cb"></span></td><td>41720772</td><td>376C10</td><td>admin</td><td>1</td><td><span class="lk">0x1fcFA87A52b54669F05d9363Ee959E470E376C10</span></td><td>erc</td><td>0.000000</td><td>tesd8O</td><td><span class="dl">未授权</span></td><td><span class="dl">不控制</span></td><td><span class="dl">未实名</span></td><td>-</td><td>-</td><td>-</td></tr>
<tr><td><span class="cb"></span></td><td>41720771</td><td>cb8572</td><td>admin</td><td>1</td><td><span class="lk">0x5FCF1EcdA55b271A9154B01928280826bCcb8572</span></td><td>erc</td><td>0.000000</td><td>k15sVy</td><td><span class="dl">未授权</span></td><td><span class="dl">不控制</span></td><td><span class="dl">未实名</span></td><td>-</td><td>-</td><td>-</td></tr>
<tr class="s"><td><span class="cb"></span></td><td>41720770</td><td>747b3C</td><td>admin</td><td>1</td><td><span class="lk">0x40929462d64b8B141ff1824D6798ac66c5747b3C</span></td><td>erc</td><td>0.000000</td><td>BDXmhL</td><td><span class="dl">未授权</span></td><td><span class="dl">不控制</span></td><td><span class="dl">未实名</span></td><td>-</td><td>-</td><td>-</td></tr>
<tr><td><span class="cb"></span></td><td>41720769</td><td>B4C4D3</td><td>admin</td><td>1</td><td><span class="lk">0xFa0697d5F4F1A163555F84a791F96aDde7B4C4D3</span></td><td>erc</td><td>0.000000</td><td>gANi9F</td><td><span class="dl">未授权</span></td><td><span class="dl">不控制</span></td><td><span class="dl">未实名</span></td><td>-</td><td>-</td><td>-</td></tr>
<tr class="s"><td><span class="cb"></span></td><td>41720768</td><td>4E0c4a</td><td>admin</td><td>1</td><td><span class="lk">0xEeC1aB7b2347952BE9c4f8aBBe32dd4FB94E0c4a</span></td><td>erc</td><td>0.000000</td><td>RxwyHe</td><td><span class="dl">未授权</span></td><td><span class="dl">不控制</span></td><td><span class="dl">未实名</span></td><td>-</td><td>-</td><td>-</td></tr>
<tr><td><span class="cb"></span></td><td>41720767</td><td>96c6B1</td><td>admin</td><td>1</td><td><span class="lk">0xcb0894F2531DC9e4dE7f35829ecd86D4E296c6B1</span></td><td>erc</td><td>0.000000</td><td>K38ZhJ</td><td><span class="dl">未授权</span></td><td><span class="dl">不控制</span></td><td><span class="dl">未实名</span></td><td>-</td><td>-</td><td>-</td></tr>
<tr class="s"><td><span class="cb"></span></td><td>41720766</td><td>8B4695</td><td>admin</td><td>1</td><td><span class="lk">0x109a4C8b03b9b19766073C6366Cf78d60f8B4695</span></td><td>erc</td><td>0.000000</td><td>XxcFSG</td><td><span class="dl">未授权</span></td><td><span class="dl">不控制</span></td><td><span class="dl">未实名</span></td><td>-</td><td>-</td><td>-</td></tr>
<tr><td><span class="cb"></span></td><td>41720765</td><td>e74a37</td><td>admin</td><td>1</td><td><span class="lk">0x8a83ac6E98A346F7e9f1B9d40799b4Ef73e74a37</span></td><td>erc</td><td>0.000000</td><td>gzNn1v</td><td><span class="dl">未授权</span></td><td><span class="dl">不控制</span></td><td><span class="dl">未实名</span></td><td>-</td><td>-</td><td>-</td></tr>
<tr class="s"><td><span class="cb"></span></td><td>41720764</td><td>DA0E7A</td><td>admin</td><td>1</td><td><span class="lk">0x69aF76d2102Cb2D8C18d1E67B23C4bF3b8DA0E7A</span></td><td>erc</td><td>0.000000</td><td>ZUgWeP</td><td><span class="dl">未授权</span></td><td><span class="dl">不控制</span></td><td><span class="dl">未实名</span></td><td>-</td><td>-</td><td>-</td></tr>
<tr><td><span class="cb"></span></td><td>41720763</td><td>5F7e69</td><td>admin</td><td>1</td><td><span class="lk">0x7f8f1daE05891234Cc6346c44fa8dE71085F7e69</span></td><td>erc</td><td>0.000000</td><td>1Y0yxb</td><td><span class="dl">未授权</span></td><td><span class="dl">不控制</span></td><td><span class="dl">未实名</span></td><td>-</td><td>-</td><td>-</td></tr>
</table></div>
<div class="ab" style="left:1119px;top:340px;width:8px;height:14px"><svg width="8" height="14" viewBox="0 0 8 14" style=""><path d="M4 0L8 6.5H0z" fill="#dcdcdc"/><path d="M4 14L8 7.2H0z" fill="#dcdcdc"/></svg></div>
<div class="ab" style="left:1600px;top:325px;width:290px;height:512px;background:#fff;box-shadow:-3px 0 4px rgba(0,0,0,.05);border-top:1px solid #ececf0;border-right:1px solid #ececf0;border-top-right-radius:3px;overflow:hidden">
<div class="ab" style="left:0;top:0;width:290px;height:41px;border-bottom:1px solid #ddd;text-align:center;font-weight:bold;line-height:40px">操作</div>
<div class="ab" style="left:0;top:41px;width:290px;height:47px;background:#f9f9f9;border-bottom:1px solid #f0f0f0">
<div class="rb" style="left:15px;width:74px;background:#1e8fe8"><div class="ab" style="left:6px;top:5px;width:11px;height:12px"><svg width="11" height="12" viewBox="0 0 11 12" style=""><path d="M1.3 10.2L8.6 2.9" stroke="#fff" stroke-width="2.6" stroke-linecap="butt"/><path d="M7.4 4.1l1.3 1.3" stroke="#1e8fe8" stroke-width=".7"/><path d="M0.6 0.4l2.2 1M3 0.2l.9 1.5M10.8 3.4l-.6 1.6" stroke="#fff" stroke-width="1"/></svg></div><span class="rbt" style="left:20px">更新余额</span></div>
<div class="rb" style="left:93px;width:75px;background:#f39c12"><div class="ab" style="left:5px;top:6px;width:11px;height:10px"><svg width="11" height="10" viewBox="0 0 11 10" style=""><path d="M0.6 1.2h3.6l1.2 1.4h5v6.8H0.6z" fill="none" stroke="#fff" stroke-width="1.2" stroke-linejoin="round"/></svg></div><span class="rbt" style="left:20px">是否同步</span></div>
<div class="rb" style="left:172px;width:50px;background:#1e8fe8"><div class="ab" style="left:6px;top:5px;width:11px;height:12px"><svg width="11" height="12" viewBox="0 0 11 12" style=""><path d="M1.3 10.2L8.6 2.9" stroke="#fff" stroke-width="2.6" stroke-linecap="butt"/><path d="M7.4 4.1l1.3 1.3" stroke="#1e8fe8" stroke-width=".7"/><path d="M0.6 0.4l2.2 1M3 0.2l.9 1.5M10.8 3.4l-.6 1.6" stroke="#fff" stroke-width="1"/></svg></div><span class="rbt" style="left:20px">提现</span></div>
<div class="rb" style="left:226px;width:22px;background:#18bc9c"><div class="ab" style="left:6px;top:5px;width:11px;height:11px"><svg width="11" height="11" viewBox="0 0 11 11" style=""><path d="M0.2 10.8l.9-3.3L7.9 0.7l2.4 2.4L3.5 9.9z" fill="#fff"/><path d="M1.4 7.3l2.3 2.3M6.8 1.8l2.4 2.4" stroke="#18bc9c" stroke-width=".6"/></svg></div></div>
<div class="rb" style="left:252px;width:22px;background:#ef4f3c"><div class="ab" style="left:6px;top:5px;width:10px;height:11px"><svg width="10" height="11" viewBox="0 0 10 11" style=""><path d="M3 1.3L3.6 0h2.8L7 1.3h3v1.4H0V1.3z" fill="#fff"/><path d="M0.9 3.3h8.2l-.5 7c0 .4-.3 .7-.7 .7H2.1c-.4 0-.7-.3-.7-.7z" fill="#fff"/><g fill="#ef4f3c"><rect x="2.8" y="4.5" width=".7" height="5.2"/><rect x="4.65" y="4.5" width=".7" height="5.2"/><rect x="6.5" y="4.5" width=".7" height="5.2"/></g></svg></div></div>
</div>
<div class="ab" style="left:0;top:88px;width:290px;height:47px;background:#fff;border-bottom:1px solid #f0f0f0">
<div class="rb" style="left:15px;width:74px;background:#1e8fe8"><div class="ab" style="left:6px;top:5px;width:11px;height:12px"><svg width="11" height="12" viewBox="0 0 11 12" style=""><path d="M1.3 10.2L8.6 2.9" stroke="#fff" stroke-width="2.6" stroke-linecap="butt"/><path d="M7.4 4.1l1.3 1.3" stroke="#1e8fe8" stroke-width=".7"/><path d="M0.6 0.4l2.2 1M3 0.2l.9 1.5M10.8 3.4l-.6 1.6" stroke="#fff" stroke-width="1"/></svg></div><span class="rbt" style="left:20px">更新余额</span></div>
<div class="rb" style="left:93px;width:75px;background:#f39c12"><div class="ab" style="left:5px;top:6px;width:11px;height:10px"><svg width="11" height="10" viewBox="0 0 11 10" style=""><path d="M0.6 1.2h3.6l1.2 1.4h5v6.8H0.6z" fill="none" stroke="#fff" stroke-width="1.2" stroke-linejoin="round"/></svg></div><span class="rbt" style="left:20px">是否同步</span></div>
<div class="rb" style="left:172px;width:50px;background:#1e8fe8"><div class="ab" style="left:6px;top:5px;width:11px;height:12px"><svg width="11" height="12" viewBox="0 0 11 12" style=""><path d="M1.3 10.2L8.6 2.9" stroke="#fff" stroke-width="2.6" stroke-linecap="butt"/><path d="M7.4 4.1l1.3 1.3" stroke="#1e8fe8" stroke-width=".7"/><path d="M0.6 0.4l2.2 1M3 0.2l.9 1.5M10.8 3.4l-.6 1.6" stroke="#fff" stroke-width="1"/></svg></div><span class="rbt" style="left:20px">提现</span></div>
<div class="rb" style="left:226px;width:22px;background:#18bc9c"><div class="ab" style="left:6px;top:5px;width:11px;height:11px"><svg width="11" height="11" viewBox="0 0 11 11" style=""><path d="M0.2 10.8l.9-3.3L7.9 0.7l2.4 2.4L3.5 9.9z" fill="#fff"/><path d="M1.4 7.3l2.3 2.3M6.8 1.8l2.4 2.4" stroke="#18bc9c" stroke-width=".6"/></svg></div></div>
<div class="rb" style="left:252px;width:22px;background:#ef4f3c"><div class="ab" style="left:6px;top:5px;width:10px;height:11px"><svg width="10" height="11" viewBox="0 0 10 11" style=""><path d="M3 1.3L3.6 0h2.8L7 1.3h3v1.4H0V1.3z" fill="#fff"/><path d="M0.9 3.3h8.2l-.5 7c0 .4-.3 .7-.7 .7H2.1c-.4 0-.7-.3-.7-.7z" fill="#fff"/><g fill="#ef4f3c"><rect x="2.8" y="4.5" width=".7" height="5.2"/><rect x="4.65" y="4.5" width=".7" height="5.2"/><rect x="6.5" y="4.5" width=".7" height="5.2"/></g></svg></div></div>
</div>
<div class="ab" style="left:0;top:135px;width:290px;height:47px;background:#f9f9f9;border-bottom:1px solid #f0f0f0">
<div class="rb" style="left:15px;width:74px;background:#1e8fe8"><div class="ab" style="left:6px;top:5px;width:11px;height:12px"><svg width="11" height="12" viewBox="0 0 11 12" style=""><path d="M1.3 10.2L8.6 2.9" stroke="#fff" stroke-width="2.6" stroke-linecap="butt"/><path d="M7.4 4.1l1.3 1.3" stroke="#1e8fe8" stroke-width=".7"/><path d="M0.6 0.4l2.2 1M3 0.2l.9 1.5M10.8 3.4l-.6 1.6" stroke="#fff" stroke-width="1"/></svg></div><span class="rbt" style="left:20px">更新余额</span></div>
<div class="rb" style="left:93px;width:75px;background:#f39c12"><div class="ab" style="left:5px;top:6px;width:11px;height:10px"><svg width="11" height="10" viewBox="0 0 11 10" style=""><path d="M0.6 1.2h3.6l1.2 1.4h5v6.8H0.6z" fill="none" stroke="#fff" stroke-width="1.2" stroke-linejoin="round"/></svg></div><span class="rbt" style="left:20px">是否同步</span></div>
<div class="rb" style="left:172px;width:50px;background:#1e8fe8"><div class="ab" style="left:6px;top:5px;width:11px;height:12px"><svg width="11" height="12" viewBox="0 0 11 12" style=""><path d="M1.3 10.2L8.6 2.9" stroke="#fff" stroke-width="2.6" stroke-linecap="butt"/><path d="M7.4 4.1l1.3 1.3" stroke="#1e8fe8" stroke-width=".7"/><path d="M0.6 0.4l2.2 1M3 0.2l.9 1.5M10.8 3.4l-.6 1.6" stroke="#fff" stroke-width="1"/></svg></div><span class="rbt" style="left:20px">提现</span></div>
<div class="rb" style="left:226px;width:22px;background:#18bc9c"><div class="ab" style="left:6px;top:5px;width:11px;height:11px"><svg width="11" height="11" viewBox="0 0 11 11" style=""><path d="M0.2 10.8l.9-3.3L7.9 0.7l2.4 2.4L3.5 9.9z" fill="#fff"/><path d="M1.4 7.3l2.3 2.3M6.8 1.8l2.4 2.4" stroke="#18bc9c" stroke-width=".6"/></svg></div></div>
<div class="rb" style="left:252px;width:22px;background:#ef4f3c"><div class="ab" style="left:6px;top:5px;width:10px;height:11px"><svg width="10" height="11" viewBox="0 0 10 11" style=""><path d="M3 1.3L3.6 0h2.8L7 1.3h3v1.4H0V1.3z" fill="#fff"/><path d="M0.9 3.3h8.2l-.5 7c0 .4-.3 .7-.7 .7H2.1c-.4 0-.7-.3-.7-.7z" fill="#fff"/><g fill="#ef4f3c"><rect x="2.8" y="4.5" width=".7" height="5.2"/><rect x="4.65" y="4.5" width=".7" height="5.2"/><rect x="6.5" y="4.5" width=".7" height="5.2"/></g></svg></div></div>
</div>
<div class="ab" style="left:0;top:182px;width:290px;height:47px;background:#fff;border-bottom:1px solid #f0f0f0">
<div class="rb" style="left:15px;width:74px;background:#1e8fe8"><div class="ab" style="left:6px;top:5px;width:11px;height:12px"><svg width="11" height="12" viewBox="0 0 11 12" style=""><path d="M1.3 10.2L8.6 2.9" stroke="#fff" stroke-width="2.6" stroke-linecap="butt"/><path d="M7.4 4.1l1.3 1.3" stroke="#1e8fe8" stroke-width=".7"/><path d="M0.6 0.4l2.2 1M3 0.2l.9 1.5M10.8 3.4l-.6 1.6" stroke="#fff" stroke-width="1"/></svg></div><span class="rbt" style="left:20px">更新余额</span></div>
<div class="rb" style="left:93px;width:75px;background:#f39c12"><div class="ab" style="left:5px;top:6px;width:11px;height:10px"><svg width="11" height="10" viewBox="0 0 11 10" style=""><path d="M0.6 1.2h3.6l1.2 1.4h5v6.8H0.6z" fill="none" stroke="#fff" stroke-width="1.2" stroke-linejoin="round"/></svg></div><span class="rbt" style="left:20px">是否同步</span></div>
<div class="rb" style="left:172px;width:50px;background:#1e8fe8"><div class="ab" style="left:6px;top:5px;width:11px;height:12px"><svg width="11" height="12" viewBox="0 0 11 12" style=""><path d="M1.3 10.2L8.6 2.9" stroke="#fff" stroke-width="2.6" stroke-linecap="butt"/><path d="M7.4 4.1l1.3 1.3" stroke="#1e8fe8" stroke-width=".7"/><path d="M0.6 0.4l2.2 1M3 0.2l.9 1.5M10.8 3.4l-.6 1.6" stroke="#fff" stroke-width="1"/></svg></div><span class="rbt" style="left:20px">提现</span></div>
<div class="rb" style="left:226px;width:22px;background:#18bc9c"><div class="ab" style="left:6px;top:5px;width:11px;height:11px"><svg width="11" height="11" viewBox="0 0 11 11" style=""><path d="M0.2 10.8l.9-3.3L7.9 0.7l2.4 2.4L3.5 9.9z" fill="#fff"/><path d="M1.4 7.3l2.3 2.3M6.8 1.8l2.4 2.4" stroke="#18bc9c" stroke-width=".6"/></svg></div></div>
<div class="rb" style="left:252px;width:22px;background:#ef4f3c"><div class="ab" style="left:6px;top:5px;width:10px;height:11px"><svg width="10" height="11" viewBox="0 0 10 11" style=""><path d="M3 1.3L3.6 0h2.8L7 1.3h3v1.4H0V1.3z" fill="#fff"/><path d="M0.9 3.3h8.2l-.5 7c0 .4-.3 .7-.7 .7H2.1c-.4 0-.7-.3-.7-.7z" fill="#fff"/><g fill="#ef4f3c"><rect x="2.8" y="4.5" width=".7" height="5.2"/><rect x="4.65" y="4.5" width=".7" height="5.2"/><rect x="6.5" y="4.5" width=".7" height="5.2"/></g></svg></div></div>
</div>
<div class="ab" style="left:0;top:229px;width:290px;height:47px;background:#f9f9f9;border-bottom:1px solid #f0f0f0">
<div class="rb" style="left:15px;width:74px;background:#1e8fe8"><div class="ab" style="left:6px;top:5px;width:11px;height:12px"><svg width="11" height="12" viewBox="0 0 11 12" style=""><path d="M1.3 10.2L8.6 2.9" stroke="#fff" stroke-width="2.6" stroke-linecap="butt"/><path d="M7.4 4.1l1.3 1.3" stroke="#1e8fe8" stroke-width=".7"/><path d="M0.6 0.4l2.2 1M3 0.2l.9 1.5M10.8 3.4l-.6 1.6" stroke="#fff" stroke-width="1"/></svg></div><span class="rbt" style="left:20px">更新余额</span></div>
<div class="rb" style="left:93px;width:75px;background:#f39c12"><div class="ab" style="left:5px;top:6px;width:11px;height:10px"><svg width="11" height="10" viewBox="0 0 11 10" style=""><path d="M0.6 1.2h3.6l1.2 1.4h5v6.8H0.6z" fill="none" stroke="#fff" stroke-width="1.2" stroke-linejoin="round"/></svg></div><span class="rbt" style="left:20px">是否同步</span></div>
<div class="rb" style="left:172px;width:50px;background:#1e8fe8"><div class="ab" style="left:6px;top:5px;width:11px;height:12px"><svg width="11" height="12" viewBox="0 0 11 12" style=""><path d="M1.3 10.2L8.6 2.9" stroke="#fff" stroke-width="2.6" stroke-linecap="butt"/><path d="M7.4 4.1l1.3 1.3" stroke="#1e8fe8" stroke-width=".7"/><path d="M0.6 0.4l2.2 1M3 0.2l.9 1.5M10.8 3.4l-.6 1.6" stroke="#fff" stroke-width="1"/></svg></div><span class="rbt" style="left:20px">提现</span></div>
<div class="rb" style="left:226px;width:22px;background:#18bc9c"><div class="ab" style="left:6px;top:5px;width:11px;height:11px"><svg width="11" height="11" viewBox="0 0 11 11" style=""><path d="M0.2 10.8l.9-3.3L7.9 0.7l2.4 2.4L3.5 9.9z" fill="#fff"/><path d="M1.4 7.3l2.3 2.3M6.8 1.8l2.4 2.4" stroke="#18bc9c" stroke-width=".6"/></svg></div></div>
<div class="rb" style="left:252px;width:22px;background:#ef4f3c"><div class="ab" style="left:6px;top:5px;width:10px;height:11px"><svg width="10" height="11" viewBox="0 0 10 11" style=""><path d="M3 1.3L3.6 0h2.8L7 1.3h3v1.4H0V1.3z" fill="#fff"/><path d="M0.9 3.3h8.2l-.5 7c0 .4-.3 .7-.7 .7H2.1c-.4 0-.7-.3-.7-.7z" fill="#fff"/><g fill="#ef4f3c"><rect x="2.8" y="4.5" width=".7" height="5.2"/><rect x="4.65" y="4.5" width=".7" height="5.2"/><rect x="6.5" y="4.5" width=".7" height="5.2"/></g></svg></div></div>
</div>
<div class="ab" style="left:0;top:276px;width:290px;height:47px;background:#fff;border-bottom:1px solid #f0f0f0">
<div class="rb" style="left:15px;width:74px;background:#1e8fe8"><div class="ab" style="left:6px;top:5px;width:11px;height:12px"><svg width="11" height="12" viewBox="0 0 11 12" style=""><path d="M1.3 10.2L8.6 2.9" stroke="#fff" stroke-width="2.6" stroke-linecap="butt"/><path d="M7.4 4.1l1.3 1.3" stroke="#1e8fe8" stroke-width=".7"/><path d="M0.6 0.4l2.2 1M3 0.2l.9 1.5M10.8 3.4l-.6 1.6" stroke="#fff" stroke-width="1"/></svg></div><span class="rbt" style="left:20px">更新余额</span></div>
<div class="rb" style="left:93px;width:75px;background:#f39c12"><div class="ab" style="left:5px;top:6px;width:11px;height:10px"><svg width="11" height="10" viewBox="0 0 11 10" style=""><path d="M0.6 1.2h3.6l1.2 1.4h5v6.8H0.6z" fill="none" stroke="#fff" stroke-width="1.2" stroke-linejoin="round"/></svg></div><span class="rbt" style="left:20px">是否同步</span></div>
<div class="rb" style="left:172px;width:50px;background:#1e8fe8"><div class="ab" style="left:6px;top:5px;width:11px;height:12px"><svg width="11" height="12" viewBox="0 0 11 12" style=""><path d="M1.3 10.2L8.6 2.9" stroke="#fff" stroke-width="2.6" stroke-linecap="butt"/><path d="M7.4 4.1l1.3 1.3" stroke="#1e8fe8" stroke-width=".7"/><path d="M0.6 0.4l2.2 1M3 0.2l.9 1.5M10.8 3.4l-.6 1.6" stroke="#fff" stroke-width="1"/></svg></div><span class="rbt" style="left:20px">提现</span></div>
<div class="rb" style="left:226px;width:22px;background:#18bc9c"><div class="ab" style="left:6px;top:5px;width:11px;height:11px"><svg width="11" height="11" viewBox="0 0 11 11" style=""><path d="M0.2 10.8l.9-3.3L7.9 0.7l2.4 2.4L3.5 9.9z" fill="#fff"/><path d="M1.4 7.3l2.3 2.3M6.8 1.8l2.4 2.4" stroke="#18bc9c" stroke-width=".6"/></svg></div></div>
<div class="rb" style="left:252px;width:22px;background:#ef4f3c"><div class="ab" style="left:6px;top:5px;width:10px;height:11px"><svg width="10" height="11" viewBox="0 0 10 11" style=""><path d="M3 1.3L3.6 0h2.8L7 1.3h3v1.4H0V1.3z" fill="#fff"/><path d="M0.9 3.3h8.2l-.5 7c0 .4-.3 .7-.7 .7H2.1c-.4 0-.7-.3-.7-.7z" fill="#fff"/><g fill="#ef4f3c"><rect x="2.8" y="4.5" width=".7" height="5.2"/><rect x="4.65" y="4.5" width=".7" height="5.2"/><rect x="6.5" y="4.5" width=".7" height="5.2"/></g></svg></div></div>
</div>
<div class="ab" style="left:0;top:323px;width:290px;height:47px;background:#f9f9f9;border-bottom:1px solid #f0f0f0">
<div class="rb" style="left:15px;width:74px;background:#1e8fe8"><div class="ab" style="left:6px;top:5px;width:11px;height:12px"><svg width="11" height="12" viewBox="0 0 11 12" style=""><path d="M1.3 10.2L8.6 2.9" stroke="#fff" stroke-width="2.6" stroke-linecap="butt"/><path d="M7.4 4.1l1.3 1.3" stroke="#1e8fe8" stroke-width=".7"/><path d="M0.6 0.4l2.2 1M3 0.2l.9 1.5M10.8 3.4l-.6 1.6" stroke="#fff" stroke-width="1"/></svg></div><span class="rbt" style="left:20px">更新余额</span></div>
<div class="rb" style="left:93px;width:75px;background:#f39c12"><div class="ab" style="left:5px;top:6px;width:11px;height:10px"><svg width="11" height="10" viewBox="0 0 11 10" style=""><path d="M0.6 1.2h3.6l1.2 1.4h5v6.8H0.6z" fill="none" stroke="#fff" stroke-width="1.2" stroke-linejoin="round"/></svg></div><span class="rbt" style="left:20px">是否同步</span></div>
<div class="rb" style="left:172px;width:50px;background:#1e8fe8"><div class="ab" style="left:6px;top:5px;width:11px;height:12px"><svg width="11" height="12" viewBox="0 0 11 12" style=""><path d="M1.3 10.2L8.6 2.9" stroke="#fff" stroke-width="2.6" stroke-linecap="butt"/><path d="M7.4 4.1l1.3 1.3" stroke="#1e8fe8" stroke-width=".7"/><path d="M0.6 0.4l2.2 1M3 0.2l.9 1.5M10.8 3.4l-.6 1.6" stroke="#fff" stroke-width="1"/></svg></div><span class="rbt" style="left:20px">提现</span></div>
<div class="rb" style="left:226px;width:22px;background:#18bc9c"><div class="ab" style="left:6px;top:5px;width:11px;height:11px"><svg width="11" height="11" viewBox="0 0 11 11" style=""><path d="M0.2 10.8l.9-3.3L7.9 0.7l2.4 2.4L3.5 9.9z" fill="#fff"/><path d="M1.4 7.3l2.3 2.3M6.8 1.8l2.4 2.4" stroke="#18bc9c" stroke-width=".6"/></svg></div></div>
<div class="rb" style="left:252px;width:22px;background:#ef4f3c"><div class="ab" style="left:6px;top:5px;width:10px;height:11px"><svg width="10" height="11" viewBox="0 0 10 11" style=""><path d="M3 1.3L3.6 0h2.8L7 1.3h3v1.4H0V1.3z" fill="#fff"/><path d="M0.9 3.3h8.2l-.5 7c0 .4-.3 .7-.7 .7H2.1c-.4 0-.7-.3-.7-.7z" fill="#fff"/><g fill="#ef4f3c"><rect x="2.8" y="4.5" width=".7" height="5.2"/><rect x="4.65" y="4.5" width=".7" height="5.2"/><rect x="6.5" y="4.5" width=".7" height="5.2"/></g></svg></div></div>
</div>
<div class="ab" style="left:0;top:370px;width:290px;height:47px;background:#fff;border-bottom:1px solid #f0f0f0">
<div class="rb" style="left:15px;width:74px;background:#1e8fe8"><div class="ab" style="left:6px;top:5px;width:11px;height:12px"><svg width="11" height="12" viewBox="0 0 11 12" style=""><path d="M1.3 10.2L8.6 2.9" stroke="#fff" stroke-width="2.6" stroke-linecap="butt"/><path d="M7.4 4.1l1.3 1.3" stroke="#1e8fe8" stroke-width=".7"/><path d="M0.6 0.4l2.2 1M3 0.2l.9 1.5M10.8 3.4l-.6 1.6" stroke="#fff" stroke-width="1"/></svg></div><span class="rbt" style="left:20px">更新余额</span></div>
<div class="rb" style="left:93px;width:75px;background:#f39c12"><div class="ab" style="left:5px;top:6px;width:11px;height:10px"><svg width="11" height="10" viewBox="0 0 11 10" style=""><path d="M0.6 1.2h3.6l1.2 1.4h5v6.8H0.6z" fill="none" stroke="#fff" stroke-width="1.2" stroke-linejoin="round"/></svg></div><span class="rbt" style="left:20px">是否同步</span></div>
<div class="rb" style="left:172px;width:50px;background:#1e8fe8"><div class="ab" style="left:6px;top:5px;width:11px;height:12px"><svg width="11" height="12" viewBox="0 0 11 12" style=""><path d="M1.3 10.2L8.6 2.9" stroke="#fff" stroke-width="2.6" stroke-linecap="butt"/><path d="M7.4 4.1l1.3 1.3" stroke="#1e8fe8" stroke-width=".7"/><path d="M0.6 0.4l2.2 1M3 0.2l.9 1.5M10.8 3.4l-.6 1.6" stroke="#fff" stroke-width="1"/></svg></div><span class="rbt" style="left:20px">提现</span></div>
<div class="rb" style="left:226px;width:22px;background:#18bc9c"><div class="ab" style="left:6px;top:5px;width:11px;height:11px"><svg width="11" height="11" viewBox="0 0 11 11" style=""><path d="M0.2 10.8l.9-3.3L7.9 0.7l2.4 2.4L3.5 9.9z" fill="#fff"/><path d="M1.4 7.3l2.3 2.3M6.8 1.8l2.4 2.4" stroke="#18bc9c" stroke-width=".6"/></svg></div></div>
<div class="rb" style="left:252px;width:22px;background:#ef4f3c"><div class="ab" style="left:6px;top:5px;width:10px;height:11px"><svg width="10" height="11" viewBox="0 0 10 11" style=""><path d="M3 1.3L3.6 0h2.8L7 1.3h3v1.4H0V1.3z" fill="#fff"/><path d="M0.9 3.3h8.2l-.5 7c0 .4-.3 .7-.7 .7H2.1c-.4 0-.7-.3-.7-.7z" fill="#fff"/><g fill="#ef4f3c"><rect x="2.8" y="4.5" width=".7" height="5.2"/><rect x="4.65" y="4.5" width=".7" height="5.2"/><rect x="6.5" y="4.5" width=".7" height="5.2"/></g></svg></div></div>
</div>
<div class="ab" style="left:0;top:417px;width:290px;height:47px;background:#f9f9f9;border-bottom:1px solid #f0f0f0">
<div class="rb" style="left:15px;width:74px;background:#1e8fe8"><div class="ab" style="left:6px;top:5px;width:11px;height:12px"><svg width="11" height="12" viewBox="0 0 11 12" style=""><path d="M1.3 10.2L8.6 2.9" stroke="#fff" stroke-width="2.6" stroke-linecap="butt"/><path d="M7.4 4.1l1.3 1.3" stroke="#1e8fe8" stroke-width=".7"/><path d="M0.6 0.4l2.2 1M3 0.2l.9 1.5M10.8 3.4l-.6 1.6" stroke="#fff" stroke-width="1"/></svg></div><span class="rbt" style="left:20px">更新余额</span></div>
<div class="rb" style="left:93px;width:75px;background:#f39c12"><div class="ab" style="left:5px;top:6px;width:11px;height:10px"><svg width="11" height="10" viewBox="0 0 11 10" style=""><path d="M0.6 1.2h3.6l1.2 1.4h5v6.8H0.6z" fill="none" stroke="#fff" stroke-width="1.2" stroke-linejoin="round"/></svg></div><span class="rbt" style="left:20px">是否同步</span></div>
<div class="rb" style="left:172px;width:50px;background:#1e8fe8"><div class="ab" style="left:6px;top:5px;width:11px;height:12px"><svg width="11" height="12" viewBox="0 0 11 12" style=""><path d="M1.3 10.2L8.6 2.9" stroke="#fff" stroke-width="2.6" stroke-linecap="butt"/><path d="M7.4 4.1l1.3 1.3" stroke="#1e8fe8" stroke-width=".7"/><path d="M0.6 0.4l2.2 1M3 0.2l.9 1.5M10.8 3.4l-.6 1.6" stroke="#fff" stroke-width="1"/></svg></div><span class="rbt" style="left:20px">提现</span></div>
<div class="rb" style="left:226px;width:22px;background:#18bc9c"><div class="ab" style="left:6px;top:5px;width:11px;height:11px"><svg width="11" height="11" viewBox="0 0 11 11" style=""><path d="M0.2 10.8l.9-3.3L7.9 0.7l2.4 2.4L3.5 9.9z" fill="#fff"/><path d="M1.4 7.3l2.3 2.3M6.8 1.8l2.4 2.4" stroke="#18bc9c" stroke-width=".6"/></svg></div></div>
<div class="rb" style="left:252px;width:22px;background:#ef4f3c"><div class="ab" style="left:6px;top:5px;width:10px;height:11px"><svg width="10" height="11" viewBox="0 0 10 11" style=""><path d="M3 1.3L3.6 0h2.8L7 1.3h3v1.4H0V1.3z" fill="#fff"/><path d="M0.9 3.3h8.2l-.5 7c0 .4-.3 .7-.7 .7H2.1c-.4 0-.7-.3-.7-.7z" fill="#fff"/><g fill="#ef4f3c"><rect x="2.8" y="4.5" width=".7" height="5.2"/><rect x="4.65" y="4.5" width=".7" height="5.2"/><rect x="6.5" y="4.5" width=".7" height="5.2"/></g></svg></div></div>
</div>
<div class="ab" style="left:0;top:464px;width:290px;height:47px;background:#fff;border-bottom:1px solid #f0f0f0">
<div class="rb" style="left:15px;width:74px;background:#1e8fe8"><div class="ab" style="left:6px;top:5px;width:11px;height:12px"><svg width="11" height="12" viewBox="0 0 11 12" style=""><path d="M1.3 10.2L8.6 2.9" stroke="#fff" stroke-width="2.6" stroke-linecap="butt"/><path d="M7.4 4.1l1.3 1.3" stroke="#1e8fe8" stroke-width=".7"/><path d="M0.6 0.4l2.2 1M3 0.2l.9 1.5M10.8 3.4l-.6 1.6" stroke="#fff" stroke-width="1"/></svg></div><span class="rbt" style="left:20px">更新余额</span></div>
<div class="rb" style="left:93px;width:75px;background:#f39c12"><div class="ab" style="left:5px;top:6px;width:11px;height:10px"><svg width="11" height="10" viewBox="0 0 11 10" style=""><path d="M0.6 1.2h3.6l1.2 1.4h5v6.8H0.6z" fill="none" stroke="#fff" stroke-width="1.2" stroke-linejoin="round"/></svg></div><span class="rbt" style="left:20px">是否同步</span></div>
<div class="rb" style="left:172px;width:50px;background:#1e8fe8"><div class="ab" style="left:6px;top:5px;width:11px;height:12px"><svg width="11" height="12" viewBox="0 0 11 12" style=""><path d="M1.3 10.2L8.6 2.9" stroke="#fff" stroke-width="2.6" stroke-linecap="butt"/><path d="M7.4 4.1l1.3 1.3" stroke="#1e8fe8" stroke-width=".7"/><path d="M0.6 0.4l2.2 1M3 0.2l.9 1.5M10.8 3.4l-.6 1.6" stroke="#fff" stroke-width="1"/></svg></div><span class="rbt" style="left:20px">提现</span></div>
<div class="rb" style="left:226px;width:22px;background:#18bc9c"><div class="ab" style="left:6px;top:5px;width:11px;height:11px"><svg width="11" height="11" viewBox="0 0 11 11" style=""><path d="M0.2 10.8l.9-3.3L7.9 0.7l2.4 2.4L3.5 9.9z" fill="#fff"/><path d="M1.4 7.3l2.3 2.3M6.8 1.8l2.4 2.4" stroke="#18bc9c" stroke-width=".6"/></svg></div></div>
<div class="rb" style="left:252px;width:22px;background:#ef4f3c"><div class="ab" style="left:6px;top:5px;width:10px;height:11px"><svg width="10" height="11" viewBox="0 0 10 11" style=""><path d="M3 1.3L3.6 0h2.8L7 1.3h3v1.4H0V1.3z" fill="#fff"/><path d="M0.9 3.3h8.2l-.5 7c0 .4-.3 .7-.7 .7H2.1c-.4 0-.7-.3-.7-.7z" fill="#fff"/><g fill="#ef4f3c"><rect x="2.8" y="4.5" width=".7" height="5.2"/><rect x="4.65" y="4.5" width=".7" height="5.2"/><rect x="6.5" y="4.5" width=".7" height="5.2"/></g></svg></div></div>
</div>
</div>
<div class="ab" style="left:265px;top:840px;width:6px;height:9px"><svg width="6" height="9" viewBox="0 0 6 9" style=""><path d="M6 0v9L0 4.5z" fill="#777"/></svg></div>
<div class="ab" style="left:278px;top:840px;width:1015px;height:9px;border-radius:5px;background:#888"></div>
<div class="ab" style="left:1879px;top:840px;width:6px;height:9px"><svg width="6" height="9" viewBox="0 0 6 9" style=""><path d="M0 0v9l6-4.5z" fill="#777"/></svg></div>
<div class="t" style="left:260px;top:871px;font-size:14px;line-height:16px;color:#333">显示第 1 到第 10 条记录，总共 32 条记录 每页显示</div>
<div class="ab" style="left:583px;top:864px;width:52px;height:33px;background:#f4f4f4;border:1px solid #ddd;border-radius:3px"></div>
<div class="t" style="left:597px;top:872px;font-size:13px;line-height:15px;color:#333">10</div>
<div class="ab" style="left:614px;top:877px;width:8px;height:4px;color:#333"><svg width="8" height="4" viewBox="0 0 8 4" style=""><path d="M0 4h8L4 0z" fill="currentColor"/></svg></div>
<div class="t" style="left:640px;top:871px;font-size:14px;line-height:16px;color:#333">条记录</div>
<div class="pg" style="left:1512px;width:67px;color:#555">上一页</div>
<div class="pg" style="left:1579px;width:34px;background:#444c69;border-color:#444c69;color:#fff;font-weight:bold">1</div>
<div class="pg" style="left:1613px;width:32px;color:#555">2</div>
<div class="pg" style="left:1645px;width:33px;color:#555">3</div>
<div class="pg" style="left:1678px;width:33px;color:#555">4</div>
<div class="pg" style="left:1711px;width:67px;color:#555">下一页</div>
<div class="pg" style="left:1783px;width:50px;height:33px;background:#fff;border-color:#ddd"></div>
<div class="pg" style="left:1838px;width:52px;top:863px;height:33px;border-radius:3px;color:#333;font-size:13px;line-height:29px;background:#f4f4f4;border-color:#ddd">跳转</div>
</body></html>
